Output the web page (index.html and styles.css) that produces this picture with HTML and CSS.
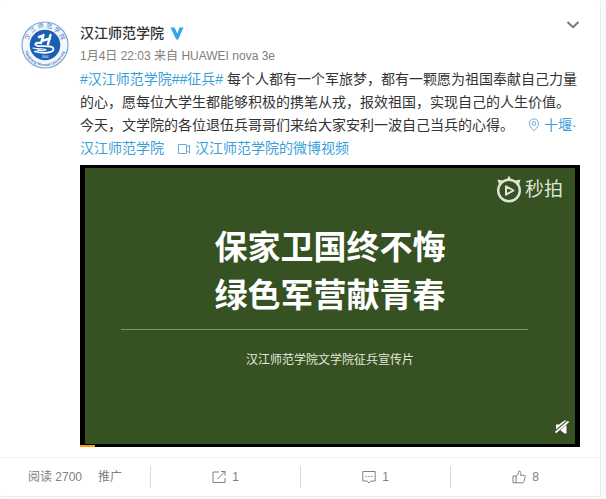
FILE: index.html
```html
<!DOCTYPE html>
<html lang="zh-CN">
<head>
    <meta charset="UTF-8">
    <meta name="viewport" content="width=device-width, initial-scale=1.0">
    <title>汉江师范学院的微博</title>
    <link rel="stylesheet" href="styles.css">
</head>
<body>

<article class="card">
    <div class="feed">
        <!-- 头像 -->
        <a class="avatar" href="#" aria-label="汉江师范学院">
            <svg viewBox="0 0 48 48" width="48" height="48">
                <defs>
                    <path id="arc-top" d="M7.6 25 A16.5 16.5 0 1 1 40.4 25"/>
                    <path id="arc-bottom" d="M3.2 27 A21 21 0 0 0 44.8 27"/>
                </defs>
                <circle cx="24" cy="24" r="23" fill="#f4f8fc" stroke="#7fa8d4" stroke-width="1.2"/>
                <circle cx="24" cy="24" r="15.3" fill="#1b5fb5"/>
                <text class="seal-name"><textPath href="#arc-top" startOffset="50%" text-anchor="middle">汉 江 师 范 学 院</textPath></text>
                <text class="seal-latin"><textPath href="#arc-bottom" startOffset="50%" text-anchor="middle">Hanjiang Normal University</textPath></text>
                <g fill="none" stroke="#fff" stroke-linecap="round" stroke-linejoin="round">
                    <path d="M22.5 14 L20 22 M18 16 L21 15" stroke-width="2.4"/>
                    <path d="M29.5 14 L27 23 M22 19.5 L29 17.5" stroke-width="2.4"/>
                    <path d="M20 22 C14 21 12 24 17 25 C23 25.5 32 24 32.5 28 C32.5 32 22 33 14 30.5" stroke-width="1.8"/>
                    <path d="M12 27 C17 28.5 25 27 25 29 C24 30.5 19 29.5 16 29" stroke-width="1.2"/>
                </g>
                <text class="seal-year" x="24" y="36.5" text-anchor="middle">1904</text>
            </svg>
        </a>

        <div class="detail">
            <header class="head">
                <div>
                    <div class="name-row">
                        <a class="name" href="#">汉江师范学院</a>
                        <svg class="verified" viewBox="0 0 14 13" width="14" height="13">
                            <path d="M0.5 0.5 H4.5 L7.4 6.5 L9.5 0.5 H13.5 L8.2 12.5 H6.2 Z" fill="#2fa8e4"/>
                        </svg>
                    </div>
                    <div class="meta"><a href="#">1月4日 22:03</a> 来自 <a href="#">HUAWEI nova 3e</a></div>
                </div>
                <button class="more" type="button" aria-label="更多">
                    <svg viewBox="0 0 14 8" width="14" height="8">
                        <path d="M1.5 1 L7 6.2 L12.5 1" fill="none" stroke="#777" stroke-width="2"/>
                    </svg>
                </button>
            </header>

            <p class="text">
                <a href="#">#汉江师范学院#</a><a href="#">#征兵#</a> 每个人都有一个军旅梦，都有一颗愿为祖国奉献自己力量的心，愿每位大学生都能够积极的携笔从戎，报效祖国，实现自己的人生价值。今天，文学院的各位退伍兵哥哥们来给大家安利一波自己当兵的心得。
                <a class="place" href="#"><svg class="icon" viewBox="0 0 12 14" width="12" height="14"><path d="M6 12.8 C3 9.5 1.4 7.6 1.4 5.5 A4.6 4.6 0 0 1 10.6 5.5 C10.6 7.6 9 9.5 6 12.8 Z"/><circle cx="6" cy="5.5" r="1.8"/></svg>十堰·<br>汉江师范学院</a>
                <a class="clip" href="#"><svg class="icon" viewBox="0 0 14 12" width="14" height="12"><path d="M1.5 1.5 H9.5 V10.5 H1.5 Z M9.5 4.8 L12.5 2 V10 L9.5 7.2"/></svg>汉江师范学院的微博视频</a>
            </p>

            <!-- 视频 -->
            <section class="video">
                <div class="brand">
                    <svg viewBox="0 0 26 27" width="26" height="27">
                        <circle cx="13" cy="14.5" r="10.8" fill="none" stroke="#dde4d6" stroke-width="2.4"/>
                        <path d="M1.5 3.5 L7 4.5 L3 8.5 Z M24.5 3.5 L19 4.5 L23 8.5 Z M11 3.5 L13 -0.5 L15 3.5 Z" fill="#dde4d6"/>
                        <path d="M10 10.3 L17.5 14.5 L10 18.7 Z" fill="none" stroke="#dde4d6" stroke-width="2" stroke-linejoin="round"/>
                    </svg>
                    <span>秒拍</span>
                </div>
                <h2 class="title">保家卫国终不悔<br>绿色军营献青春</h2>
                <hr class="rule">
                <div class="caption">汉江师范学院文学院征兵宣传片</div>
                <button class="mute" type="button" aria-label="静音">
                    <svg viewBox="0 0 14 14" width="14" height="14">
                        <path d="M1 4.5 H4 L9.5 0.5 H11.5 V13.5 H9.5 L4.5 9.5 H1 Z" fill="#fff"/>
                        <path d="M0 12.5 L13.5 1" stroke="#365122" stroke-width="3.4"/>
                        <path d="M0.5 12.5 L13.5 1.5" stroke="#fff" stroke-width="1.8"/>
                    </svg>
                </button>
                <div class="played"></div>
            </section>
        </div>
    </div>

    <footer class="actions">
        <div class="stats">
            <span>阅读 2700</span>
            <a href="#">推广</a>
        </div>
        <button type="button" aria-label="转发">
            <svg class="icon" viewBox="0 0 14 14" width="14" height="14"><path d="M7 2 H1 V12.5 H13 V8 M9 1.5 H13 V5.5 M13 1.5 L5.5 9"/></svg>
            <span>1</span>
        </button>
        <button type="button" aria-label="评论">
            <svg class="icon" viewBox="0 0 14 14" width="14" height="14"><path d="M0.8 1.5 H13.2 V11 H9 L7 13 L5 11 H0.8 Z M3.5 6.5 H5 M6.3 6.5 H7.8 M9.1 6.5 H10.6"/></svg>
            <span>1</span>
        </button>
        <button type="button" aria-label="赞">
            <svg class="icon" viewBox="0 0 14 14" width="14" height="14"><path d="M1 6 H4 V12.8 H1 Z M4 6.2 C6 5 6.5 3.5 6.6 1.2 C8.5 0.4 9.4 2.5 8.6 5.3 H12 C13.2 5.3 13.4 6.2 13.1 7.2 L11.8 11.8 C11.5 12.6 11 12.8 10.4 12.8 H4"/></svg>
            <span>8</span>
        </button>
    </footer>
</article>

</body>
</html>
```

FILE: styles.css
```css
body {
    margin: 0;
    background-color: #fafafa;
    font-family: "Liberation Sans", "Noto Sans CJK SC", sans-serif;
    font-size: 12px;
    color: #333;
}

a {
    color: inherit;
    text-decoration: none;
}

button {
    padding: 0;
    border: none;
    background: none;
    font: inherit;
    color: inherit;
    cursor: pointer;
}

svg {
    display: block;
}

.card {
    margin-right: 5px;
    background-color: #fff;
    border-right: 1px solid #ededed;
    border-bottom: 1px solid #ededed;
    border-radius: 3px;
}

.feed {
    display: flex;
    gap: 11px;
    padding: 21px 20px 10px 21px;
}

.avatar {
    flex: none;
}

.seal-name {
    font-size: 6px;
    fill: #3f78bb;
}

.seal-latin {
    font-size: 4px;
    font-weight: bold;
    fill: #4a80c0;
}

.seal-year {
    font-size: 3px;
    fill: #fff;
}

.detail {
    flex: 1;
    min-width: 0;
}

.head {
    display: flex;
    justify-content: space-between;
    align-items: flex-start;
}

.name-row {
    display: flex;
    align-items: center;
    gap: 6px;
}

.name {
    font-size: 14px;
    font-weight: 500;
    line-height: 24px;
}

.meta {
    line-height: 23px;
    color: #808080;
}

/* 文字 */
.text {
    margin: 0 0 5px;
    font-size: 14px;
    line-height: 23px;
}

.text a {
    color: #3a9fd8;
}

.icon {
    fill: none;
    stroke: #808080;
    stroke-width: 1;
}

.text .icon {
    display: inline-block;
    margin-right: 4px;
    vertical-align: -2px;
    stroke: #6fa6d6;
}

.place {
    margin-left: 10px;
}

.clip {
    margin-left: 9px;
}

/* 视频 */
.video {
    position: relative;
    display: flex;
    flex-direction: column;
    padding: 8px 6px 10px;
    border: solid #000;
    border-width: 3px 5px;
    background-color: #365122;
    color: #fff;
}

.brand {
    display: flex;
    align-items: center;
    align-self: flex-end;
    gap: 3px;
    margin-right: 6px;
    font-size: 19px;
    line-height: 27px;
    color: #dde4d6;
}

.title {
    margin: 18px 0 12px;
    font-family: "Noto Sans CJK SC", sans-serif;
    font-size: 33px;
    font-weight: 700;
    line-height: 48px;
    text-align: center;
}

.rule {
    align-self: stretch;
    height: 1px;
    margin: 0 41px 20px 30px;
    border: none;
    background-color: #7f9173;
}

.caption {
    line-height: 20px;
    text-align: center;
    color: #e3e8de;
}

.mute {
    align-self: flex-end;
    margin-top: 50px;
}

.played {
    position: absolute;
    left: -5px;
    bottom: -3px;
    width: 15px;
    height: 2px;
    background-color: #ff9e0d;
}

/* 底部操作栏 */
.actions {
    display: grid;
    grid-template-columns: repeat(4, 1fr);
    padding: 8px 0;
    border-top: 1px solid #f0f0f0;
    line-height: 22px;
    color: #808080;
}

.stats {
    display: flex;
    justify-content: center;
    gap: 16px;
}

.actions button {
    display: flex;
    justify-content: center;
    align-items: center;
    gap: 6px;
    border-left: 1px solid #d9d9d9;
}
```
